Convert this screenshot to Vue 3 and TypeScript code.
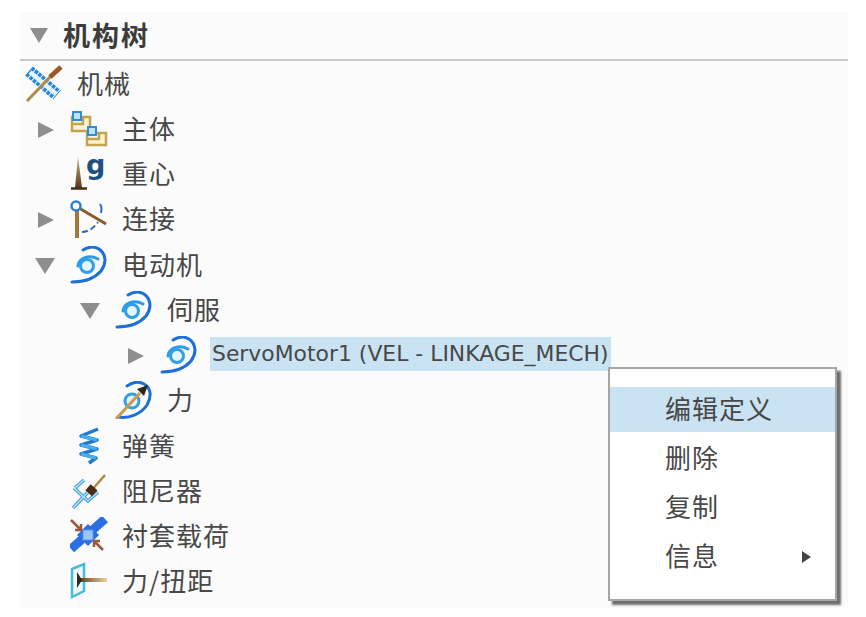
<script setup lang="ts">
interface TreeRow {
  label: string
  icon: string
  level: number
  arrow?: 'open' | 'closed'
  selected?: boolean
}

const rows: TreeRow[] = [
  { label: '机械', icon: 'mech', level: 0 },
  { label: '主体', icon: 'bodies', level: 1, arrow: 'closed' },
  { label: '重心', icon: 'cog', level: 1 },
  { label: '连接', icon: 'joint', level: 1, arrow: 'closed' },
  { label: '电动机', icon: 'motor', level: 1, arrow: 'open' },
  { label: '伺服', icon: 'motor', level: 2, arrow: 'open' },
  { label: 'ServoMotor1 (VEL - LINKAGE_MECH)', icon: 'motor', level: 3, arrow: 'closed', selected: true },
  { label: '力', icon: 'force', level: 2 },
  { label: '弹簧', icon: 'spring', level: 1 },
  { label: '阻尼器', icon: 'damper', level: 1 },
  { label: '衬套载荷', icon: 'bushing', level: 1 },
  { label: '力/扭距', icon: 'torque', level: 1 }
]

const menuItems = [
  { label: '编辑定义', active: true },
  { label: '删除' },
  { label: '复制' },
  { label: '信息', sub: true }
]

function indent(level: number) {
  // level 0 has no arrow column, so it starts a little further left
  return level === 0 ? 5 : 45 * (level - 1) + 5
}
</script>

<template>
  <div class="page">
    <svg class="defs" width="0" height="0" aria-hidden="true">
      <defs>
        <linearGradient id="rodFade" gradientUnits="userSpaceOnUse" x1="8" x2="36" y1="18" y2="18">
          <stop offset="0" stop-color="#5a3315" />
          <stop offset="1" stop-color="#e8cf9a" />
        </linearGradient>
        <linearGradient id="coneFade" x1="0" x2="0" y1="0" y2="1">
          <stop offset="0" stop-color="#d8b98a" />
          <stop offset="1" stop-color="#5a3315" />
        </linearGradient>
        <symbol id="mech" viewBox="0 0 38 38">
          <path d="M4 6 L32 30" stroke="#2288e0" stroke-width="12" stroke-dasharray="3.5 1" fill="none" />
          <path d="M5 7 L31 29" stroke="#e6f3fc" stroke-width="4.5" fill="none" />
          <path d="M2 36 L26 11" stroke="#b08a4a" stroke-width="3" fill="none" />
          <path d="M25 12 L36 2" stroke="#9a5a2a" stroke-width="5" fill="none" />
        </symbol>
        <symbol id="bodies" viewBox="0 0 38 38">
          <path d="M2 7 H20 V21 H2 Z M2 14 H13 V7" fill="#fbf3d5" stroke="#c2a34e" stroke-width="2.5" />
          <rect x="3" y="2" width="8" height="8" fill="#bfe3fb" stroke="#2c8fdc" stroke-width="2" />
          <path d="M17 23 H36 V35 H17 Z M17 29 H29 V23" fill="#fbf3d5" stroke="#c2a34e" stroke-width="2.5" />
          <rect x="18" y="17" width="8" height="8" fill="#bfe3fb" stroke="#2c8fdc" stroke-width="2" />
        </symbol>
        <symbol id="cog" viewBox="0 0 38 38">
          <path d="M8 1 L12 33 H5 Z" fill="url(#coneFade)" />
          <path d="M1 33.5 H17" stroke="#4a2c12" stroke-width="2.5" />
          <text x="16" y="19" class="cog-g">g</text>
        </symbol>
        <symbol id="joint" viewBox="0 0 38 38">
          <path d="M7 6 V38" stroke="#a9763a" stroke-width="4" />
          <path d="M9 8 L36 24" stroke="#8a5a2a" stroke-width="3" />
          <circle cx="6" cy="6" r="4.5" fill="#fff" stroke="#2c7fdc" stroke-width="2.5" />
          <path d="M30 4 C32 7 32 9 31 13" stroke="#2c6fb8" stroke-width="2" fill="none" />
          <path d="M12 32 C18 32 24 28 28 22" stroke="#2c6fb8" stroke-width="2" stroke-dasharray="6 3" fill="none" />
        </symbol>
        <symbol id="motor" viewBox="0 0 38 38">
          <path d="M2 36 C14 36 24 33 31 25 C37 17 36 8 29 3 C24 0 18 1 13 4" fill="none" stroke="#1c6fd8" stroke-width="3" stroke-linecap="round" />
          <path d="M8 20 C9 12 19 8 28 13" fill="none" stroke="#2c9be8" stroke-width="3" stroke-linecap="round" />
          <circle cx="17" cy="20" r="6.5" fill="#e6f4fc" stroke="#2f9fe8" stroke-width="3" />
        </symbol>
        <symbol id="force" viewBox="0 0 38 38">
          <path d="M3 36 C14 38 26 33 32 24 C37 15 36 7 29 3 C24 0 18 1 12 5" fill="none" stroke="#1c6fd8" stroke-width="3" stroke-linecap="round" />
          <circle cx="17" cy="20" r="7" fill="#e6f4fc" stroke="#2f9fe8" stroke-width="3" />
          <path d="M1 38 L25 12" stroke="#c99a4f" stroke-width="3" />
          <path d="M33 4 L22 8 L29 15 Z" fill="#33261a" />
        </symbol>
        <symbol id="spring" viewBox="0 0 38 38">
          <path d="M28 2 L11 9 L27 13 L11 18 L27 22 L11 27 L26 31 L19 36" fill="none" stroke="#2078d0" stroke-width="3.5" stroke-linejoin="round" />
          <path d="M11 9 L27 13 M11 18 L27 22 M11 27 L26 31" stroke="#45b0ec" stroke-width="3" />
        </symbol>
        <symbol id="damper" viewBox="0 0 38 38">
          <path d="M3 36 L20 18 M5 16 L14 8 M4 16 L18 29 L28 20" fill="none" stroke="#3d9fdc" stroke-width="3.5" />
          <path d="M3 36 L20 18 M5 16 L14 8 M4 16 L18 29 L28 20" fill="none" stroke="#c4e3f7" stroke-width="1.2" />
          <path d="M21 19 L35 3" stroke="#b08a4a" stroke-width="2.5" />
          <rect x="17" y="14" width="9" height="8" transform="rotate(42 21 18)" fill="#4a2c12" />
        </symbol>
        <symbol id="bushing" viewBox="0 0 38 38">
          <path d="M1 32 L35 2" stroke="#2b6fe0" stroke-width="9" />
          <path d="M18 7 L29 18 L18 29 L7 18 Z" fill="#2b6fe0" />
          <rect x="13" y="13" width="10" height="10" fill="#9cc7f5" stroke="#5b8fe8" />
          <path d="M1 3 L11 13 M11 7 V13 H5" fill="none" stroke="#9a5a3a" stroke-width="2.5" />
          <path d="M33 33 L24 24 M24 30 V24 H30" fill="none" stroke="#9a5a3a" stroke-width="2.5" />
        </symbol>
        <symbol id="torque" viewBox="0 0 38 38">
          <path d="M2 7 L14 2 V29 L2 35 Z" fill="#eef8fc" stroke="#45bcd8" stroke-width="2.5" />
          <path d="M8 18 H37" stroke="url(#rodFade)" stroke-width="4" />
          <path d="M7 10 L12 18 L7 26 Z" fill="#33261a" />
        </symbol>
      </defs>
    </svg>

    <div class="panel">
      <div class="header">
        <span class="header-arrow"></span>
        <span class="header-title">机构树</span>
      </div>
      <div class="tree">
        <div v-for="row in rows" :key="row.label" class="row" :style="{ paddingLeft: indent(row.level) + 'px' }">
          <span v-if="row.level > 0" class="arrow-slot">
            <span v-if="row.arrow" :class="row.arrow === 'open' ? 'tri-down' : 'tri-right'"></span>
          </span>
          <svg class="icon" width="38" height="38"><use :href="'#' + row.icon" /></svg>
          <span class="label" :class="{ selected: row.selected }">{{ row.label }}</span>
        </div>
      </div>

      <div class="menu">
        <div v-for="item in menuItems" :key="item.label" class="menu-item" :class="{ active: item.active }">
          <span class="menu-text">{{ item.label }}</span>
          <span v-if="item.sub" class="sub-arrow"></span>
        </div>
      </div>
    </div>
  </div>
</template>

<style scoped>
.page {
  width: 866px;
  height: 617px;
  padding: 12px 18px 9px 20px;
  box-sizing: border-box;
  background: #fff;
  color: #484848;
  font-family: "Noto Sans CJK SC", "DejaVu Sans", sans-serif;
  overflow: hidden;
}

.defs {
  position: absolute;
}

.panel {
  position: relative;
  height: 100%;
  background: #fbfbfb;
}

.header {
  display: flex;
  align-items: center;
  height: 47px;
  border-bottom: 2px solid #c9c9c9;
  padding-left: 10px;
}

.header-arrow {
  width: 0;
  height: 0;
  border-left: 9px solid transparent;
  border-right: 9px solid transparent;
  border-top: 15px solid #8e8e8e;
  margin-right: 15px;
}

.header-title {
  font-size: 27px;
  font-weight: 700;
  letter-spacing: 2px;
  color: #3c3c3c;
  line-height: 1;
  margin-top: -3px;
}

.tree {
  padding-top: 1px;
}

.row {
  display: flex;
  align-items: center;
  height: 45.25px;
}

.arrow-slot {
  width: 45px;
  display: flex;
  align-items: center;
  justify-content: center;
  padding-right: 4px;
  box-sizing: border-box;
}

.tri-right {
  width: 0;
  height: 0;
  border-top: 8px solid transparent;
  border-bottom: 8px solid transparent;
  border-left: 16px solid #8e8e8e;
}

.tri-down {
  width: 0;
  height: 0;
  border-left: 10px solid transparent;
  border-right: 10px solid transparent;
  border-top: 16px solid #8e8e8e;
  margin-right: 2px;
}

.icon {
  flex: none;
  margin-right: 14px;
  margin-top: -2px;
}

.cog-g {
  font-family: "DejaVu Sans", sans-serif;
  font-size: 27px;
  font-weight: 700;
  fill: #1f4f80;
}

.label {
  font-size: 26px;
  letter-spacing: 1px;
  line-height: 34px;
  white-space: nowrap;
  margin-top: -4px;
}

.label.selected {
  font-family: "DejaVu Sans", sans-serif;
  font-size: 21.9px;
  letter-spacing: 0;
  background: #c9e3f3;
  padding: 0 2px;
  margin-left: -2px;
  margin-top: -4px;
}

.menu {
  position: absolute;
  left: 588px;
  top: 355px;
  width: 229px;
  height: 234px;
  box-sizing: border-box;
  padding: 18px 0;
  border: 2px solid #a6a6a6;
  background: #fff;
  box-shadow: 4px 4px 2px #6f6f6f;
  display: flex;
  flex-direction: column;
  gap: 4px;
}

.menu-item {
  display: flex;
  align-items: center;
  justify-content: space-between;
  height: 45px;
  flex: none;
  padding: 0 24px 0 55px;
  font-size: 26px;
  letter-spacing: 1px;
}

.menu-text {
  margin-top: -4px;
}

.menu-item.active {
  background: #c9e3f3;
}

.sub-arrow {
  width: 0;
  height: 0;
  border-top: 6px solid transparent;
  border-bottom: 6px solid transparent;
  border-left: 9px solid #444;
}
</style>

<style>
html,
body {
  margin: 0;
}
</style>
